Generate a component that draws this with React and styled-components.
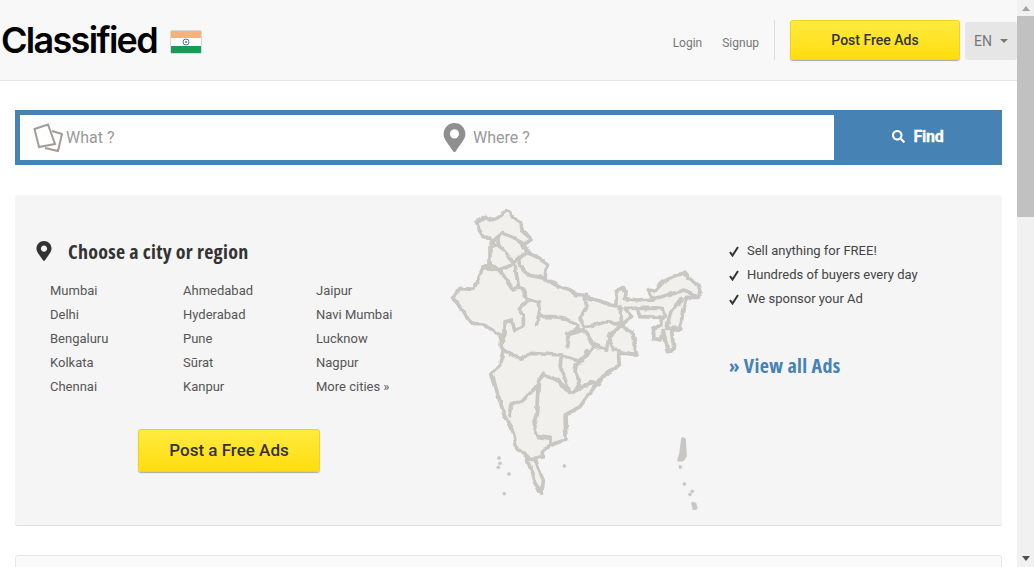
import styled, { createGlobalStyle } from "styled-components";
import { FaMapMarkerAlt, FaSearch } from "react-icons/fa";

const GlobalStyle = createGlobalStyle`
    html, body {
        margin: 0;
        height: 100%;
        overflow: hidden;
    }
    body {
        font-family: Roboto, "Liberation Sans", sans-serif;
        background: #fff;
    }
`;

const cities = [
    ["Mumbai", "Delhi", "Bengaluru", "Kolkata", "Chennai"],
    ["Ahmedabad", "Hyderabad", "Pune", "Sūrat", "Kanpur"],
    ["Jaipur", "Navi Mumbai", "Lucknow", "Nagpur", "More cities »"],
];

const perks = ["Sell anything for FREE!", "Hundreds of buyers every day", "We sponsor your Ad"];

// traced outline of the country, units are 1/3 px
const outline = "M107 68 L118 58 L135 52 L150 60 L170 55 L185 45 L198 32 L210 35 L218 52 L240 68 L243 90 L255 100 L272 118 L252 132 L258 148 L265 160 L285 168 L326 195 L318 210 L315 237 L335 248 L360 262 L385 272 L410 285 L440 283 L448 295 L480 303 L510 315 L530 318 L532 295 L530 272 L548 263 L555 280 L552 295 L590 300 L640 297 L632 285 L625 272 L645 270 L665 248 L690 235 L710 225 L735 220 L750 238 L775 255 L780 275 L775 292 L738 292 L728 330 L722 388 L695 395 L702 450 L685 455 L670 392 L660 420 L642 415 L640 385 L665 375 L668 352 L600 350 L590 325 L552 325 L575 350 L545 375 L575 395 L590 465 L560 460 L535 460 L538 495 L500 520 L460 565 L420 620 L375 645 L378 718 L335 735 L310 750 L310 770 L285 775 L310 845 L305 880 L285 850 L260 770 L230 745 L220 700 L190 640 L155 520 L180 490 L190 450 L180 435 L185 405 L160 395 L130 372 L100 370 L78 350 L60 320 L40 295 L60 265 L100 268 L130 205 L150 195 L150 140 L170 135 L130 105 Z";
const borders = [
    "M150 132 L175 110 L190 100 L215 110 L245 125 L262 158",
    "M175 110 L180 140 L220 185 L235 175 L262 158",
    "M150 195 L180 210 L215 195 L220 185",
    "M235 175 L240 195 L265 225 L315 235",
    "M225 195 L235 260 L220 270 L180 212",
    "M130 205 L180 212 L215 265 L245 265 L260 295 L295 305 L298 340 L290 375",
    "M295 350 L340 350 L380 355 L410 375 L412 390 L380 400",
    "M260 305 L235 330 L250 350 L250 375 L225 390 L215 360 L195 365 L195 400 L185 430",
    "M435 285 L440 320 L420 355 L430 380 L465 375 L500 365 L540 370",
    "M410 385 L430 390 L460 435 L500 450 L505 420",
    "M380 440 L385 405 L430 390",
    "M540 320 L545 370 L505 410 L520 450 L590 465",
    "M460 435 L440 470 L415 480 L365 465",
    "M590 325 L665 325 L675 350",
    "M640 297 L735 270 L770 290",
    "M725 295 L690 345 L680 385 L720 385",
    "M190 450 L245 480 L270 460 L365 465 L360 500 L375 535 L390 580",
    "M440 450 L430 480 L410 490 L405 515 L420 550 L400 580 L450 545 L475 550",
    "M390 580 L350 540 L310 520 L295 545 L290 640 L280 675 L295 710 L330 715 L335 735",
    "M295 555 L250 600 L215 615 L210 650",
    "M250 760 L270 775 L285 775",
];
const islands = [
    [177, 774], [180, 790], [175, 802], [207, 822], [193, 881], [373, 798],
    [721, 801], [733, 852], [757, 874], [750, 883],
];

function IndiaMap() {
    return (
        <MapSvg viewBox="0 0 810 960">
            <defs>
                <filter id="rough" x="-5%" y="-5%" width="110%" height="110%">
                    <feTurbulence type="fractalNoise" baseFrequency="0.035" numOctaves="2" seed="4" />
                    <feDisplacementMap in="SourceGraphic" scale="14" xChannelSelector="R" yChannelSelector="G" />
                </filter>
            </defs>
            <g fill="none" stroke="#c8c7c2" strokeWidth="11" strokeLinejoin="round" strokeLinecap="round" filter="url(#rough)">
                <path d={outline} fill="#f1f0ec" />
                {borders.map((d) => <path key={d} d={d} />)}
            </g>
            <g fill="#c8c7c2" stroke="#c8c7c2" strokeLinejoin="round">
                {islands.map(([x, y]) => <circle key={x + "-" + y} cx={x} cy={y} r="5" />)}
                <path d="M728 716 L733 718 L735 750 L736 768 L728 780 L716 780 L722 760 Z" strokeWidth="9" />
                <path d="M758 910 L765 912 L768 924 L762 926 Z" strokeWidth="9" />
            </g>
        </MapSvg>
    );
}

function Flag() {
    return (
        <FlagSvg viewBox="0 0 32 24">
            <rect x="0.5" y="0.5" width="31" height="23" rx="1.5" fill="#fff" stroke="#d8d8d8" />
            <rect x="1" y="1" width="30" height="7" fill="#f7b27a" />
            <rect x="1" y="16" width="30" height="7" fill="#1c9a57" />
            <circle cx="16" cy="12" r="3" fill="none" stroke="#5a6fb0" strokeWidth="1" />
            <circle cx="16" cy="12" r="1" fill="#5a6fb0" />
        </FlagSvg>
    );
}

function SquaresIcon() {
    return (
        <svg width="30" height="30" viewBox="0 0 30 30" fill="none" stroke="#a29c96" strokeWidth="2">
            <path d="M1.5 6 L15 1.5 L22 21 L6 24 Z" fill="#fff" />
            <path d="M12 25 L25 28 L29 11 L19 8" />
        </svg>
    );
}

function CheckIcon() {
    return (
        <svg width="10" height="11" viewBox="0 0 10 11" fill="none" stroke="#333" strokeWidth="2">
            <path d="M1 6 L3.5 9.5 L9 1" />
        </svg>
    );
}

export default function App() {
    return (
        <Style.Window>
            <GlobalStyle />
            <Style.Page>
                <Style.Header>
                    <Style.Brand>
                        <Style.Logo>Classified</Style.Logo>
                        <Flag />
                    </Style.Brand>
                    <Style.HeaderRight>
                        <Style.NavLink>Login</Style.NavLink>
                        <Style.NavLink>Signup</Style.NavLink>
                        <Style.Separator />
                        <Style.PostButton>Post Free Ads</Style.PostButton>
                        <Style.LangButton>EN<Style.Caret /></Style.LangButton>
                    </Style.HeaderRight>
                </Style.Header>

                <Style.SearchBar>
                    <Style.SearchField $width="413px" $pad="13px" $gap="3px">
                        <SquaresIcon />
                        <Style.Placeholder>What ?</Style.Placeholder>
                    </Style.SearchField>
                    <Style.SearchField $width="401px" $pad="7px" $gap="4px">
                        <FaMapMarkerAlt size={29} color="#8f8f8f" />
                        <Style.Placeholder>Where ?</Style.Placeholder>
                    </Style.SearchField>
                    <Style.FindButton><FaSearch size={13} />Find</Style.FindButton>
                </Style.SearchBar>

                <Style.Hero>
                    <Style.LeftColumn>
                        <Style.RegionTitle>
                            <FaMapMarkerAlt size={20} color="#333" />
                            <span>Choose a city or region</span>
                        </Style.RegionTitle>
                        <Style.CityGrid>
                            {cities.map((column) => (
                                <Style.CityColumn key={column[0]}>
                                    {column.map((city) => <Style.City key={city}>{city}</Style.City>)}
                                </Style.CityColumn>
                            ))}
                        </Style.CityGrid>
                        <Style.BigPostButton>Post a Free Ads</Style.BigPostButton>
                    </Style.LeftColumn>
                    <IndiaMap />
                    <Style.RightColumn>
                        {perks.map((perk) => (
                            <Style.Perk key={perk}><CheckIcon />{perk}</Style.Perk>
                        ))}
                        <Style.ViewAll>» View all Ads</Style.ViewAll>
                    </Style.RightColumn>
                </Style.Hero>

                <Style.NextCard />
            </Style.Page>

            <Style.Scrollbar>
                <Style.ArrowUp />
                <Style.Thumb />
                <Style.Track />
                <Style.ArrowDown />
            </Style.Scrollbar>
        </Style.Window>
    );
}

const MapSvg = styled.svg`
    width: 270px;
    height: 320px;
    margin-top: 5px;
    flex-shrink: 0;
`;

const FlagSvg = styled.svg`
    width: 32px;
    height: 24px;
    margin: 4px 0 0 13px;
`;

const condensed = `
    font-family: "Open Sans", "Liberation Sans", sans-serif;
    font-stretch: 75%;
    font-weight: 700;
`;

const yellowButton = `
    display: flex;
    align-items: center;
    justify-content: center;
    box-sizing: border-box;
    background: linear-gradient(#ffeb3f, #ffdd0f);
    border: 1px solid #f2d21e;
    border-radius: 3px;
    box-shadow: 0 1px 1px #aaa;
    color: #333;
`;

const Style = {
    Window: styled.div`
        display: flex;
        width: 1034px;
        height: 567px;
        overflow: hidden;
    `,

    Page: styled.div`
        width: 1017px;
        flex-shrink: 0;
        height: 567px;
        overflow: hidden;
    `,

    Header: styled.header`
        display: flex;
        justify-content: space-between;
        height: 80px;
        background: #f8f8f8;
        border-bottom: 1px solid #e6e6e6;
    `,

    Brand: styled.div`
        display: flex;
        align-items: center;
        padding-left: 1px;
    `,

    Logo: styled.div`
        font-family: Inter, "Liberation Sans", sans-serif;
        font-size: 36px;
        font-weight: 600;
        letter-spacing: -1.7px;
        color: #000;
    `,

    HeaderRight: styled.div`
        display: flex;
        align-items: flex-start;
        padding-top: 20px;
    `,

    NavLink: styled.a`
        font-size: 12px;
        line-height: 46px;
        color: #777;
        margin-right: 20px;
        &:nth-child(2) {
            margin-right: 15px;
        }
    `,

    Separator: styled.div`
        width: 1px;
        height: 40px;
        background: #ddd;
        margin-right: 15px;
    `,

    PostButton: styled.div`
        ${yellowButton}
        width: 170px;
        height: 40px;
        font-size: 14px;
        font-weight: 500;
    `,

    LangButton: styled.div`
        display: flex;
        align-items: center;
        gap: 8px;
        box-sizing: border-box;
        width: 52px;
        height: 38px;
        margin: 2px 0 0 5px;
        padding-left: 9px;
        background: #e6e6e6;
        border-radius: 3px;
        font-size: 14px;
        color: #777;
    `,

    Caret: styled.span`
        border-top: 4px solid #777;
        border-left: 4px solid transparent;
        border-right: 4px solid transparent;
    `,

    SearchBar: styled.div`
        display: flex;
        box-sizing: border-box;
        width: 987px;
        height: 55px;
        margin: 29px 0 0 15px;
        background: #4682b4;
        padding: 5px 0 5px 5px;
    `,

    SearchField: styled.div`
        display: flex;
        align-items: center;
        gap: ${(props) => props.$gap};
        box-sizing: border-box;
        width: ${(props) => props.$width};
        padding-left: ${(props) => props.$pad};
        background: #fff;
    `,

    Placeholder: styled.span`
        font-size: 16px;
        color: #999;
    `,

    FindButton: styled.div`
        flex: 1;
        display: flex;
        align-items: center;
        justify-content: center;
        gap: 8px;
        padding-bottom: 2px;
        font-size: 16px;
        font-weight: 700;
        letter-spacing: -0.2px;
        -webkit-text-stroke: 0.3px #fff;
        color: #fff;
    `,

    Hero: styled.section`
        display: flex;
        box-sizing: border-box;
        width: 987px;
        height: 331px;
        margin: 30px 0 0 15px;
        background: #f5f5f5;
        border-bottom: 1px solid #ddd;
        border-radius: 3px;
    `,

    LeftColumn: styled.div`
        width: 425px;
        flex-shrink: 0;
        padding-top: 41px;
    `,

    RegionTitle: styled.h2`
        ${condensed}
        display: flex;
        align-items: center;
        gap: 14px;
        height: 30px;
        margin: 0 0 13px 19px;
        font-size: 20px;
        letter-spacing: 0.28px;
        color: #333;
    `,

    CityGrid: styled.div`
        display: grid;
        grid-template-columns: repeat(3, 133px);
        padding-left: 35px;
    `,

    CityColumn: styled.div``,

    City: styled.a`
        display: block;
        font-size: 13px;
        line-height: 24px;
        color: #555;
    `,

    BigPostButton: styled.div`
        ${yellowButton}
        width: 182px;
        height: 43px;
        margin: 30px 0 0 123px;
        padding-bottom: 2px;
        font-size: 17px;
        font-weight: 500;
    `,

    RightColumn: styled.div`
        margin-left: 19px;
        padding-top: 44px;
    `,

    Perk: styled.div`
        display: flex;
        align-items: center;
        gap: 8px;
        font-size: 13px;
        line-height: 24px;
        color: #444;
    `,

    ViewAll: styled.a`
        ${condensed}
        display: block;
        margin-top: 40px;
        font-size: 20px;
        letter-spacing: 0.4px;
        line-height: 30px;
        color: #4682b4;
    `,

    NextCard: styled.div`
        box-sizing: border-box;
        width: 987px;
        height: 40px;
        margin: 29px 0 0 15px;
        background: #fafafa;
        border: 1px solid #e8e8e8;
        border-radius: 3px;
    `,

    Scrollbar: styled.div`
        width: 17px;
        height: 567px;
        display: flex;
        flex-direction: column;
        align-items: center;
        background: #f1f1f1;
    `,

    ArrowUp: styled.div`
        margin: 6px 0 5px;
        border-bottom: 5px solid #a3a3a3;
        border-left: 4px solid transparent;
        border-right: 4px solid transparent;
    `,

    Thumb: styled.div`
        width: 100%;
        height: 201px;
        background: #c1c1c1;
    `,

    Track: styled.div`
        flex: 1;
    `,

    ArrowDown: styled.div`
        margin: 5px 0 6px;
        border-top: 5px solid #505050;
        border-left: 4px solid transparent;
        border-right: 4px solid transparent;
    `,
};
